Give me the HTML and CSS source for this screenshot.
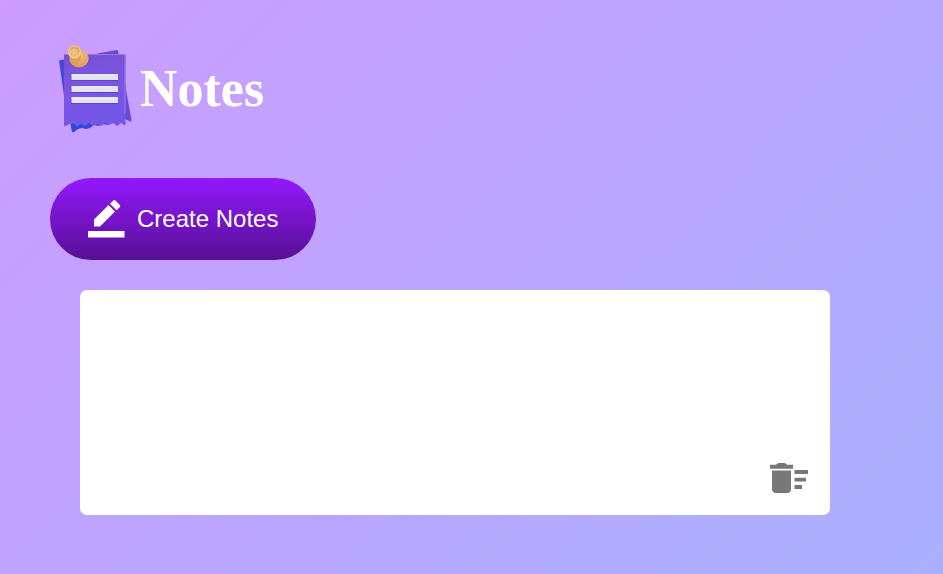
FILE: index.html
```html
<!DOCTYPE html>
<html lang="en">
<head>
<meta charset="utf-8">
<meta name="viewport" content="width=device-width, initial-scale=1">
<title>Notes</title>
<link rel="stylesheet" href="styles.css">
</head>
<body>
<main class="container">
  <h1 class="title">
    <svg class="logo" viewBox="0 0 90 90" aria-hidden="true">
      <defs>
        <linearGradient id="front" x1="0" y1="0" x2="0.2" y2="1">
          <stop offset="0" stop-color="#7450d2"/>
          <stop offset="0.4" stop-color="#7c55df"/>
          <stop offset="1" stop-color="#7456e8"/>
        </linearGradient>
        <linearGradient id="back" x1="0" y1="0" x2="1" y2="0">
          <stop offset="0" stop-color="#4546dc"/>
          <stop offset="1" stop-color="#6a4cd8"/>
        </linearGradient>
        <linearGradient id="bar" x1="0" y1="0" x2="0" y2="1">
          <stop offset="0" stop-color="#e8e8f4"/>
          <stop offset="1" stop-color="#e0e1ee"/>
        </linearGradient>
        <radialGradient id="pin" cx="0.6" cy="0.35" r="0.7">
          <stop offset="0" stop-color="#f0bd74"/>
          <stop offset="1" stop-color="#d99850"/>
        </radialGradient>
      </defs>
      <path fill="url(#back)" d="M9 16.500 67 6Q68 6 68 7L69 12 75 40 81.500 76Q81.500 78 80 77.500L75 75 16 66Z"/>
      <path fill="#2f4ad8" d="M20 76H62L58 81 53 80 48 82 44 81 40 84 36 85 32 84 28 85 24 88Q22 89 21.500 86Z"/>
      <path fill="url(#front)" d="M14 11Q14 10 15 10H74.500Q75.500 10 75.500 11V80Q75.500 81.500 74 81L71 79 67 82 63 79 59 81 55 79 51 82 47 80 43 82 39 79 35 82 31 80 27 82 23 79 19 80 16 82Q14 83 14 80Z"/>
      <path fill="none" stroke="#967be8" d="M14.500 10.500H75V70"/>
      <g fill="#6640c2">
        <path d="M21 32h47v5H21zM21 44h47v5H21zM21 55h47v5H21z"/>
      </g>
      <g fill="url(#bar)">
        <rect x="21.500" y="30" width="46.500" height="6" rx="0.500"/>
        <rect x="21.500" y="42" width="46.500" height="6" rx="0.500"/>
        <rect x="21.500" y="53" width="46.500" height="6" rx="0.500"/>
      </g>
      <ellipse cx="29" cy="14.500" rx="9.700" ry="9" fill="url(#pin)"/>
      <path fill="#dda05a" d="M19 11 23.500 15 23 19Q25 21 29 18.500 31 17 31 13L30.500 7Z"/>
      <circle cx="24.500" cy="8" r="6.700" fill="#f3c582"/>
      <ellipse cx="24.500" cy="7" rx="5" ry="4.500" fill="#dda55e"/>
      <ellipse cx="24" cy="8" rx="4" ry="3.500" fill="#eabd79"/>
    </svg>
    Notes
  </h1>
  <button class="create" type="button">
    <svg class="create-icon" viewBox="0 0 37 38" aria-hidden="true">
      <path fill="#fff" d="M6 19.500 20.500 5l6.500 6.500L12 26.500H6zM22 3.700 25 .7q1.300-1.300 2.600 0l4 4q1.200 1.200 0 2.500l-3 3zM0 31h36.500v6.500H0z"/>
    </svg>
    Create Notes
  </button>
  <section class="notes">
    <article class="note">
      <textarea class="note-text" aria-label="Note"></textarea>
      <button class="delete" type="button" aria-label="Delete note">
        <svg class="delete-icon" viewBox="0 0 38 30" aria-hidden="true">
          <path fill="#787878" d="M0 1.700h6Q7 0 9 0h5q2 0 3 1.700h6v4H0zM2 7.500h19V26q0 4-4 4H6q-4 0-4-4zM24.500 7H38v4H24.500zM24.500 14.700H36v3.800H24.500zM24.500 22H32v4h-7.500z"/>
        </svg>
      </button>
    </article>
  </section>
</main>
</body>
</html>
```
FILE: styles.css
```css
* {
  box-sizing: border-box;
}

body {
  margin: 0;
  min-height: 100vh;
  background: linear-gradient(135deg, #cc9cff, #aab0ff);
  font-family: "Liberation Sans", Arial, sans-serif;
}

.container {
  padding: 44px 50px;
}

.title {
  display: flex;
  align-items: center;
  margin: 0 0 44px;
  color: #fff;
  font: bold 52px/60px "Liberation Serif", "Times New Roman", serif;
}

.logo {
  width: 90px;
  height: 90px;
}

.create {
  display: flex;
  align-items: center;
  gap: 12px;
  height: 82px;
  padding: 0 38px;
  border: 0;
  border-radius: 41px;
  background: linear-gradient(#9418fd, #571094);
  color: #fff;
  font: 24px "Liberation Sans", Arial, sans-serif;
  cursor: pointer;
}

.create-icon {
  width: 37px;
  height: 38px;
}

.notes {
  padding: 30px 0 0 30px;
}

.note {
  position: relative;
  max-width: 750px;
}

.note-text {
  display: block;
  width: 100%;
  height: 225px;
  padding: 20px;
  border: 0;
  border-radius: 7px;
  background: #fff;
  color: #333;
  font: 24px "Liberation Sans", Arial, sans-serif;
  resize: none;
}

.delete {
  position: absolute;
  right: 22px;
  bottom: 22px;
  padding: 0;
  border: 0;
  background: none;
  cursor: pointer;
}

.delete-icon {
  display: block;
  width: 38px;
  height: 30px;
}
```
